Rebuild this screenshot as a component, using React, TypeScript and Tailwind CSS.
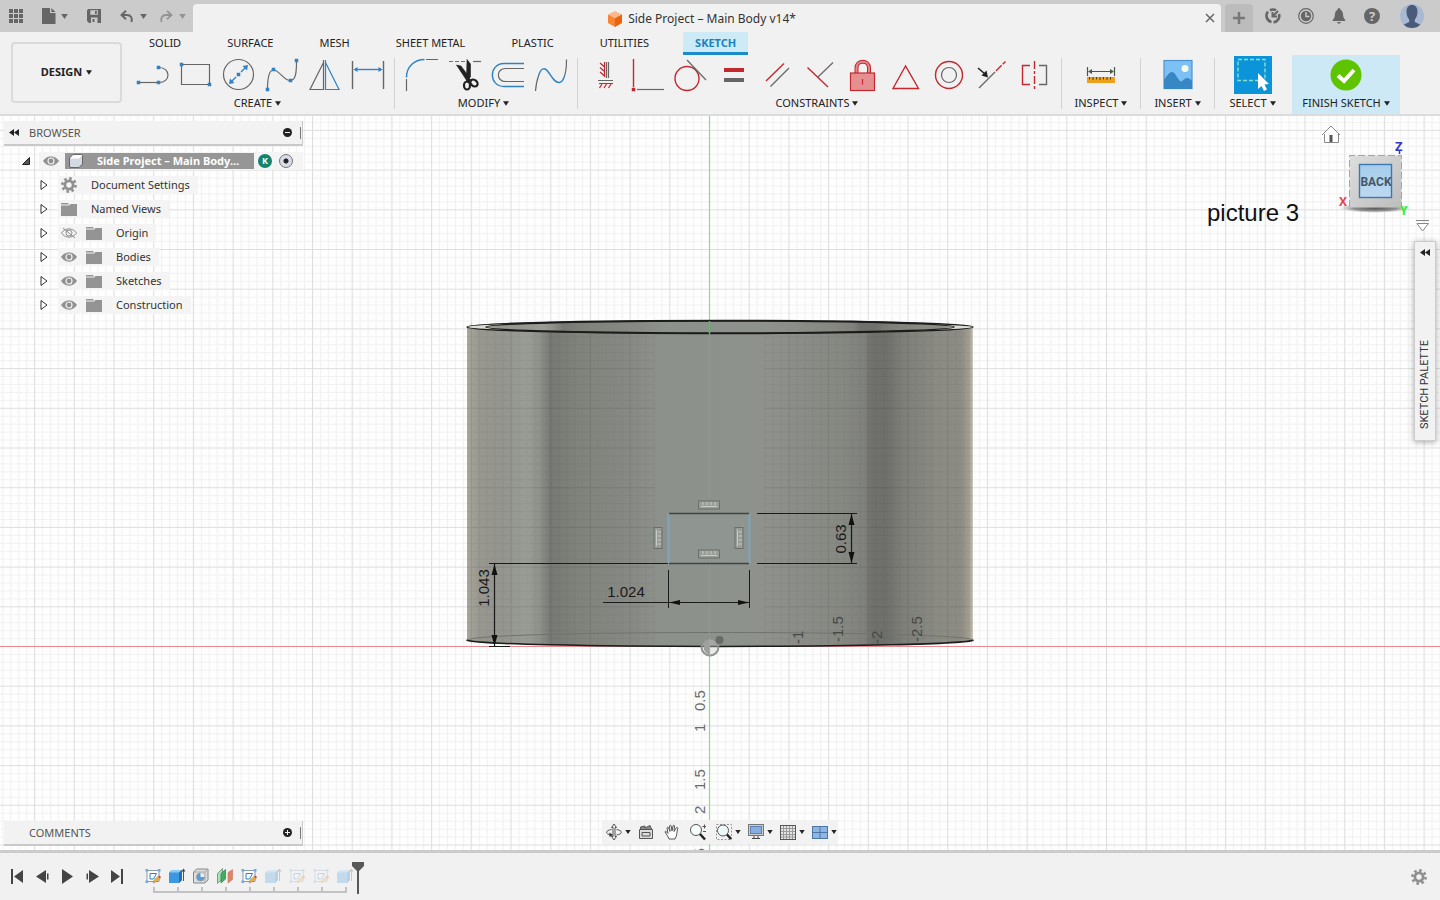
import type { ReactNode } from "react";

const BLUE = "#2f82c4";
const GREY = "#666666";
const RED = "#c4282f";

function Caret({ className = "h-[5px] w-[7px]" }: { className?: string }) {
  return (
    <svg viewBox="0 0 8 6" className={className} fill="currentColor" aria-hidden="true">
      <path d="M0 0H8L4 6Z" />
    </svg>
  );
}

function Tool({ label, children }: { label: string; children: ReactNode }) {
  return (
    <button aria-label={label} className="h-8 w-8 shrink-0">
      <svg viewBox="0 0 32 32" className="h-8 w-8 overflow-visible" fill="none" stroke={GREY} strokeWidth="1.2">
        {children}
      </svg>
    </button>
  );
}

function Dot({ x, y, color = BLUE }: { x: number; y: number; color?: string }) {
  return <rect x={x - 1.75} y={y - 1.75} width="3.5" height="3.5" fill={color} stroke="none" />;
}

const CREATE_TOOLS = [
  {
    label: "Line",
    icon: (
      <>
        <path d="M1.5 23.5H21.5" />
        <path d="M22 8.5C34 8.5 34 23.5 22 23.5" />
        <Dot x={1.5} y={23.5} />
        <Dot x={21.5} y={23.5} />
        <Dot x={21.5} y={8.5} />
      </>
    ),
  },
  {
    label: "Rectangle",
    icon: (
      <>
        <path d="M1.5 5.5H29.5V25.5H1.5Z" />
        <Dot x={1.5} y={5.5} />
        <Dot x={29.5} y={25.5} />
      </>
    ),
  },
  {
    label: "Circle",
    icon: (
      <>
        <circle cx="15.5" cy="15.5" r="15" />
        <path d="M9 22L13 18M18 13L22 9" stroke={BLUE} strokeWidth="1.4" />
        <path d="M6 25L7 19.5L11.5 24ZM25 6L24 11.5L19.5 7Z" fill={BLUE} stroke="none" />
        <Dot x={15.5} y={15.5} />
      </>
    ),
  },
  {
    label: "Spline",
    icon: (
      <>
        <path d="M1.5 30.5C1.5 19 3 11 7.5 11C13 11 18 21.5 24 21.5C30 21.5 30.5 13 30.5 2" />
        <Dot x={1.5} y={30.5} />
        <Dot x={7.5} y={10.5} />
        <Dot x={24.5} y={21.5} />
        <Dot x={30.5} y={1.5} />
      </>
    ),
  },
  {
    label: "Mirror",
    icon: (
      <>
        <path d="M1 30.5H14.5V3.5ZM14.5 1V31" />
        <path d="M30 30.5H16.5V3.5ZM16.5 1V31" stroke={BLUE} />
      </>
    ),
  },
  {
    label: "Sketch Dimension",
    icon: (
      <>
        <path d="M.5 2V30M31.5 2V30" strokeWidth="1.4" />
        <path d="M3 10.5H29" stroke={BLUE} strokeWidth="1.4" />
        <path d="M1.5 10.5L5.5 8V13ZM30.5 10.5L26.5 8V13Z" fill={BLUE} stroke="none" />
      </>
    ),
  },
];

const MODIFY_TOOLS = [
  {
    label: "Fillet",
    icon: (
      <>
        <path d="M.5 20V32M20 .5H32" />
        <path d="M.5 18.5C.5 8 8 .5 18.5 .5" stroke={BLUE} strokeWidth="1.4" />
      </>
    ),
  },
  {
    label: "Trim",
    icon: (
      <>
        <path d="M0 2.5H17" stroke={BLUE} strokeDasharray="4 2" />
        <path d="M24 2.5H32" />
        <path d="M7.5 6L12 7L21 19L18 22ZM18 .5L21.5 5V18L17.5 20Z" fill="#222" stroke="#222" strokeWidth=".6" />
        <ellipse cx="18" cy="26.5" rx="3" ry="4" stroke="#222" strokeWidth="2.2" />
        <ellipse cx="25" cy="24" rx="3" ry="4" stroke="#222" strokeWidth="2.2" transform="rotate(-50 25 24)" />
        <path d="M17 18L23 21L18 24Z" fill="#222" stroke="none" />
      </>
    ),
  },
  {
    label: "Offset",
    icon: (
      <>
        <path d="M32 4.5H12C-3.5 4.5-3.5 27.5 12 27.5H32" stroke={BLUE} strokeWidth="1.4" />
        <path d="M32 9.5H13.5C4 9.5 4 22.5 13.5 22.5H32" />
      </>
    ),
  },
  {
    label: "Curvature",
    icon: (
      <>
        <path d="M.5 32C1 26 2 21 3.5 17M29.5 17C31 13 31.5 7 31.5 .5" />
        <path d="M3.5 17C6 8 10 8 14 14C17 18.5 20 24 24.5 23.5C27 23 28.5 20.5 29.5 17" stroke={BLUE} strokeWidth="1.4" />
      </>
    ),
  },
];

const CONSTRAINT_TOOLS = [
  {
    label: "Horizontal/Vertical",
    icon: (
      <>
        <path d="M17.5 3V19M19.5 3V19M9 21.5H24" />
        <path
          d="M11 4L15.500 8M11 8.5L15.5 12.5M11 13L15.5 17M15.5 3V18M10 24.5H24M13 25L10.5 29M17.5 25L15 29M22 25L19.5 29"
          stroke={RED}
        />
      </>
    ),
  },
  {
    label: "Coincident",
    icon: (
      <>
        <path d="M5 30.5H32" />
        <path d="M1.5 0V28" stroke={RED} strokeWidth="1.4" />
        <Dot x={1.5} y={30.5} color={RED} />
      </>
    ),
  },
  {
    label: "Tangent",
    icon: (
      <>
        <circle cx="12" cy="19.5" r="12" stroke={RED} strokeWidth="1.4" />
        <path d="M12 1L31 21" />
      </>
    ),
  },
  {
    label: "Equal",
    icon: (
      <>
        <path d="M6 11H26" stroke={RED} strokeWidth="4" />
        <path d="M6 21H26" strokeWidth="4" />
      </>
    ),
  },
  {
    label: "Parallel",
    icon: (
      <>
        <path d="M9.5 27.5L28 9" />
        <path d="M5 22L23 4.5" stroke={RED} strokeWidth="1.4" />
      </>
    ),
  },
  {
    label: "Perpendicular",
    icon: (
      <>
        <path d="M14 18L29 3.5" />
        <path d="M3.5 8.5L24 28" stroke={RED} strokeWidth="1.4" />
      </>
    ),
  },
  {
    label: "Fix/Unfix",
    icon: (
      <>
        <path d="M9.5 14V9C9.5 .5 22 .5 22 9V14" stroke={RED} strokeWidth="4" />
        <path d="M9.5 14V9C9.5 .5 22 .5 22 9V14" stroke="#e08a8c" strokeWidth="2" />
        <rect x="3.5" y="14" width="24" height="17.5" fill="#e58f90" stroke={RED} />
        <path d="M15.5 20V25.5" stroke={RED} />
      </>
    ),
  },
  {
    label: "MidPoint",
    icon: <path d="M15.5 7L3 29.5H28.5Z" stroke={RED} strokeWidth="1.4" />,
  },
  {
    label: "Concentric",
    icon: (
      <>
        <circle cx="16" cy="16" r="13.5" stroke={RED} strokeWidth="1.4" />
        <circle cx="16" cy="16" r="7.5" />
      </>
    ),
  },
  {
    label: "Collinear",
    icon: (
      <>
        <path d="M3 29L19 13" />
        <path d="M20 12L29.5 2.5" stroke={RED} strokeWidth="1.4" strokeDasharray="8 1.5" />
        <path d="M2 9L9 15" stroke="#222" strokeWidth="1.6" />
        <path d="M12 18.5L5.5 16.5L10.5 11.5Z" fill="#222" stroke="none" />
      </>
    ),
  },
  {
    label: "Symmetry",
    icon: (
      <>
        <path d="M20 6.5H27.5V25.5H20" strokeWidth="1.4" />
        <path d="M11 6.5H3.5V25.5H11" stroke={RED} strokeWidth="1.4" />
        <path d="M15.5 2V30" stroke={RED} strokeWidth="1.4" strokeDasharray="8 2 3 2" />
      </>
    ),
  },
];

const TOOL_GROUPS = [
  { name: "CREATE", tools: CREATE_TOOLS },
  { name: "MODIFY", tools: MODIFY_TOOLS },
  { name: "CONSTRAINTS", tools: CONSTRAINT_TOOLS },
];

const TABS = ["SOLID", "SURFACE", "MESH", "SHEET METAL", "PLASTIC", "UTILITIES", "SKETCH"];

function GroupLabel({ children }: { children: ReactNode }) {
  return (
    <button className="flex items-center justify-center gap-[3px] text-[11px] leading-4 whitespace-nowrap">
      {children}
      <Caret className="h-[5px] w-[6px]" />
    </button>
  );
}

function Separator() {
  return <div className="mt-[3px] h-[51px] w-px shrink-0 bg-[#d2d2d2]" />;
}

function TitleBar() {
  return (
    <header className="flex h-8 shrink-0 items-end bg-[#cbcbcb] text-[#666]">
      <div className="flex h-8 w-[193px] shrink-0 items-center gap-[19px] pl-[9px]">
        <button aria-label="Data panel">
          <svg viewBox="0 0 14 14" className="size-3.5" fill="currentColor">
            <path d="M0 0h4v4H0zM5 0h4v4H5zM10 0h4v4h-4zM0 5h4v4H0zM5 5h4v4H5zM10 5h4v4h-4zM0 10h4v4H0zM5 10h4v4H5zM10 10h4v4h-4z" />
          </svg>
        </button>
        <button aria-label="File" className="flex items-center gap-[5px]">
          <svg viewBox="0 0 14 16" className="h-4 w-3.5" fill="currentColor">
            <path d="M0 0h8v5h5.5v11H0zM9.3 0L13.5 4H9.3z" />
          </svg>
          <Caret />
        </button>
        <button aria-label="Save">
          <svg viewBox="0 0 14 14" className="size-3.5" fill="currentColor">
            <path fillRule="evenodd" d="M0 1.2L1.2 0H14v14H2L0 12zM3.3 1.2v4.6h7.6V1.2zM4 8.5V14h6.5V8.5z" />
            <path d="M8 2h1.8v3H8zM5.5 10h2v3h-2z" />
          </svg>
        </button>
        <div className="flex items-center gap-3">
          <button aria-label="Undo" className="flex items-center gap-[6px]">
            <svg viewBox="0 0 14 13" className="h-[13px] w-3.5" fill="none" stroke="currentColor" strokeWidth="2">
              <path d="M2 5H7C11 5 12.5 8 11.5 12" />
              <path d="M6 .8L1.5 5L6 9.2" />
            </svg>
            <Caret />
          </button>
          <button aria-label="Redo" className="flex items-center gap-[6px] text-[#939393]">
            <svg viewBox="0 0 14 13" className="h-[13px] w-3.5" fill="none" stroke="currentColor" strokeWidth="1.8">
              <path d="M12 5H7C3 5 1.5 8 2.5 12" />
              <path d="M8 .8L12.5 5L8 9.2" />
            </svg>
            <Caret />
          </button>
        </div>
      </div>
      <div className="flex h-7 flex-1 items-center rounded-t bg-[#f1f1f1] px-1.5 text-[#333]">
        <div className="flex flex-1 items-center justify-center gap-1.5 pt-0.5">
          <svg viewBox="0 0 14 16" className="h-4 w-3.5" aria-hidden="true">
            <path d="M7 0L14 3.5L7 7L0 3.5Z" fill="#fbb98b" />
            <path d="M0 3.5L7 7V16L0 12Z" fill="#fa8434" />
            <path d="M14 3.5L7 7V16L14 12Z" fill="#e8640c" />
          </svg>
          <h1 className="text-[12px] leading-4">Side Project – Main Body v14*</h1>
        </div>
        <button aria-label="Close tab">
          <svg viewBox="0 0 10 10" className="size-2.5" stroke="#666" strokeWidth="1.5">
            <path d="M1 1L9 9M9 1L1 9" />
          </svg>
        </button>
      </div>
      <div className="ml-1 flex h-8 w-[215px] shrink-0 items-center">
        <button aria-label="New tab" className="mt-1 flex h-7 w-7 items-center justify-center rounded-t bg-[#bcbcbc]">
          <svg viewBox="0 0 14 14" className="size-3.5" stroke="#777" strokeWidth="2.5">
            <path d="M7 1V13M1 7H13" />
          </svg>
        </button>
        <div className="ml-3 flex items-center gap-[17px]">
          <button aria-label="Extensions">
            <svg viewBox="0 0 16 16" className="size-4" fill="none" stroke="currentColor" strokeWidth="2.6">
              <path d="M6.5 14A6.500 6.500 0 0 1 3 3.500" />
              <path d="M5 2.300A6.500 6.500 0 0 1 11 2.200" />
              <path d="M14 6A6.500 6.500 0 0 1 8.500 14.300" />
              <path d="M7.500 4V8.500H12M8 8L13 3" strokeWidth="2" />
            </svg>
          </button>
          <button aria-label="Job status">
            <svg viewBox="0 0 16 16" className="size-4" fill="none" stroke="currentColor">
              <circle cx="8" cy="8" r="7.3" strokeWidth="1.2" />
              <circle cx="8" cy="8" r="5.2" fill="currentColor" stroke="none" />
              <path d="M8 4V8.500H11.500" stroke="#cbcbcb" strokeWidth="1.400" />
            </svg>
          </button>
          <button aria-label="Notifications">
            <svg viewBox="0 0 16 16" className="size-4" fill="currentColor">
              <path d="M8 0C9 0 9.400 .8 9.400 1.800C12 3 12 6 12.300 8.500C12.500 10.500 14.500 11.500 14.500 13H1.500C1.500 11.500 3.500 10.500 3.700 8.500C4 6 4 3 6.600 1.800C6.600 .8 7 0 8 0ZM6 14H10C9.500 16.300 6.500 16.300 6 14Z" />
            </svg>
          </button>
          <button aria-label="Help" className="size-4 rounded-full bg-[#666] text-[13px] leading-4 font-bold text-[#cbcbcb]">
            ?
          </button>
        </div>
        <button aria-label="Account" className="ml-5">
          <svg viewBox="0 0 24 24" className="size-6">
            <clipPath id="avatar">
              <circle cx="12" cy="12" r="12" />
            </clipPath>
            <g clipPath="url(#avatar)">
              <rect width="24" height="24" fill="#a9b9d3" />
              <path
                d="M12 1C15.500 1 17.500 3.500 17.500 7.500C17.500 11 16.500 13.500 14.800 15.500V18L21 21V24H3V21L9.200 18V15.500C7.500 13.500 6.500 11 6.500 7.500C6.500 3.500 8.500 1 12 1Z"
                fill="#495b78"
              />
            </g>
          </svg>
        </button>
      </div>
    </header>
  );
}

function Ribbon() {
  return (
    <div className="flex h-[84px] shrink-0 border-b-2 border-[#dcdcdc] bg-[#f1f1f1] text-[#222]">
      <button className="mt-[10px] ml-[11px] flex h-[61px] w-[111px] shrink-0 items-center justify-center gap-1 rounded border-2 border-[#dadada] text-[11px] font-bold">
        DESIGN
        <Caret className="h-[5px] w-[6px]" />
      </button>
      <div className="flex min-w-0 flex-1 flex-col pl-[15px]">
        <nav className="flex h-[23px] gap-[22px]">
          {TABS.map((tab) => (
            <a
              key={tab}
              href="#"
              className={
                tab === "SKETCH"
                  ? "border-b-[3px] border-[#1a8cc9] bg-[#cdeaf7] px-3 pt-[3px] text-[11px] leading-4 font-bold text-[#1a82bd]"
                  : "px-3 pt-[3px] text-[11px] leading-4 text-[#222]"
              }
            >
              {tab}
            </a>
          ))}
        </nav>
        <div className="flex h-[59px]">
          {TOOL_GROUPS.map((group, index) => (
            <div key={group.name} className="flex">
              <div className={index === 0 ? "flex flex-col pr-2.5" : "flex flex-col pr-2.5 pl-[11px]"}>
                <div className="flex h-10 items-center gap-[11px]">
                  {group.tools.map((tool) => (
                    <Tool key={tool.label} label={tool.label}>
                      {tool.icon}
                    </Tool>
                  ))}
                </div>
                <div className="flex justify-center pr-1.5">
                  <GroupLabel>{group.name}</GroupLabel>
                </div>
              </div>
              <Separator />
            </div>
          ))}
          <div className="flex w-[78px] flex-col items-center">
            <div className="flex h-10 items-center">
              <Tool label="Measure">
                <path d="M2.5 8V17M29.5 8V17M5 12.5H27" stroke="#4a5a4a" />
                <path d="M3 12.5L7 10V15ZM29 12.5L25 10V15Z" fill="#4a5a4a" stroke="none" />
                <rect x="2" y="18" width="28" height="6" fill="#f0a11c" stroke="none" />
                <path d="M4.5 18V20.5M8 18V21M11.5 18V20.5M15 18V21M18.5 18V20.5M22 18V21M25.5 18V20.5" stroke="#5a4010" strokeWidth="1" />
              </Tool>
            </div>
            <GroupLabel>INSPECT</GroupLabel>
          </div>
          <Separator />
          <div className="flex w-[73px] flex-col items-center">
            <div className="flex h-10 items-center">
              <Tool label="Insert image">
                <rect x="2" y="1.5" width="28" height="28" fill="#7cc0f5" stroke="#4d94cc" />
                <circle cx="23" cy="9.5" r="3.5" fill="#f4fbe6" stroke="none" />
                <path d="M2 21C5 17 7 13 10 13C13 13 15 19 18 22C20 24 22 19 25 19C27 19 28.5 20 30 22V30H2Z" fill="#3787c4" stroke="none" />
              </Tool>
            </div>
            <GroupLabel>INSERT</GroupLabel>
          </div>
          <Separator />
          <div className="flex w-[75px] flex-col items-center">
            <button aria-label="Window selection" className="my-px size-[38px]">
              <svg viewBox="0 0 38 38" className="size-[38px]">
                <rect width="38" height="38" fill="#0b94da" />
                <path d="M4 3.5H31V24.5H4Z" fill="none" stroke="#8be0c8" strokeWidth="1.4" strokeDasharray="4 2" />
                <path d="M24 17V33L27.5 30L30 35L33 33.5L30.5 28.5L35 28Z" fill="#fff" />
              </svg>
            </button>
            <GroupLabel>SELECT</GroupLabel>
          </div>
          <div className="ml-0.5 flex w-[108px] flex-col items-center bg-[#cde9f5]">
            <button aria-label="Finish sketch" className="flex h-10 items-center">
              <svg viewBox="0 0 32 32" className="size-8">
                <circle cx="16" cy="16" r="15.5" fill="#5fc400" />
                <path d="M8 16.5L14 22L24 11" fill="none" stroke="#fff" strokeWidth="4" />
              </svg>
            </button>
            <GroupLabel>FINISH SKETCH</GroupLabel>
          </div>
        </div>
      </div>
    </div>
  );
}

/* Ruler glyph that marks a horizontal or vertical constraint */
function ConstraintGlyph({ x, y, vertical = false }: { x: number; y: number; vertical?: boolean }) {
  return (
    <g transform={vertical ? `translate(${x} ${y}) rotate(90)` : `translate(${x} ${y})`} fill="none">
      <rect x="-10.5" y="-4" width="21" height="8" fill="#9a9e98" stroke="#6b6e69" />
      <path d="M-8 1.5H8M-6 -3V0M-2 -3V0M2 -3V0M6 -3V0" stroke="#c9cbc6" />
    </g>
  );
}

const AXIS_LABELS = [
  { text: "-1", x: 803, y: 644 },
  { text: "-1.5", x: 843, y: 642 },
  { text: "-2", x: 882, y: 644 },
  { text: "-2.5", x: 922, y: 642 },
  { text: "0.5", x: 705, y: 711 },
  { text: "1", x: 705, y: 732 },
  { text: "1.5", x: 705, y: 790 },
  { text: "2", x: 705, y: 814 },
  { text: "2.5", x: 705, y: 869 },
];

const DIMENSIONS = [
  { text: "1.043", x: 489, y: 588, rotate: true },
  { text: "0.63", x: 846, y: 539, rotate: true },
  { text: "1.024", x: 626, y: 597, rotate: false },
];

function Viewport() {
  return (
    <svg
      viewBox="0 116 1440 734"
      preserveAspectRatio="xMidYMid slice"
      className="absolute inset-0 h-full w-full"
      role="img"
      aria-label="Sketch canvas"
    >
      <defs>
        <pattern id="minor" x="709" y="646" width="7.94" height="7.94" patternUnits="userSpaceOnUse">
          <path d="M0 .5H7.94M.5 0V7.94" stroke="#000" strokeOpacity=".05" />
        </pattern>
        <pattern id="major" x="709" y="646" width="39.7" height="39.7" patternUnits="userSpaceOnUse">
          <path d="M0 .5H39.7M.5 0V39.7" stroke="#000" strokeOpacity=".08" />
        </pattern>
        <linearGradient id="shell">
          <stop offset="0" stopColor="#a9a69b" />
          <stop offset=".025" stopColor="#98978f" />
          <stop offset=".07" stopColor="#94958f" />
          <stop offset=".12" stopColor="#9a9c96" />
          <stop offset=".145" stopColor="#8d8f89" />
          <stop offset=".165" stopColor="#777974" />
          <stop offset=".22" stopColor="#80827c" />
          <stop offset=".33" stopColor="#888b85" />
          <stop offset=".38" stopColor="#8d918b" />
          <stop offset=".6" stopColor="#8e918c" />
          <stop offset=".74" stopColor="#868882" />
          <stop offset=".785" stopColor="#80817c" />
          <stop offset=".8" stopColor="#70716c" />
          <stop offset=".83" stopColor="#6f706b" />
          <stop offset=".86" stopColor="#7d7e78" />
          <stop offset=".93" stopColor="#8b8b84" />
          <stop offset=".975" stopColor="#8d8b83" />
          <stop offset=".993" stopColor="#a29e92" />
          <stop offset="1" stopColor="#cfcabb" />
        </linearGradient>
      </defs>
      <rect x="-600" y="-300" width="2640" height="1600" fill="#fefefe" />
      <rect x="-600" y="-300" width="2640" height="1600" fill="url(#minor)" />
      <rect x="-600" y="-300" width="2640" height="1600" fill="url(#major)" />
      <path d="M-600 646.500H2040" stroke="#e8898f" strokeWidth="1.2" />
      <path d="M709.500 -300V1300" stroke="#7de87d" strokeWidth="1.2" />

      <path d="M467 327C467 318 973 318 973 327V640C973 649 467 649 467 640Z" fill="url(#shell)" />
      <g opacity=".7">
        <rect x="467" y="322" width="188" height="322" fill="url(#minor)" />
        <rect x="764" y="322" width="209" height="322" fill="url(#minor)" />
        <rect x="467" y="322" width="188" height="322" fill="url(#major)" />
        <rect x="764" y="322" width="209" height="322" fill="url(#major)" />
      </g>
      <ellipse cx="720" cy="327" rx="253" ry="6.5" fill="#ddddd6" />
      <ellipse cx="720" cy="327" rx="234" ry="6.5" fill="url(#shell)" />
      <g fill="none" stroke="#1c1c1c" strokeWidth="1.5">
        <ellipse cx="720" cy="327" rx="253" ry="6.5" />
        <ellipse cx="720" cy="327" rx="234" ry="6" />
        <path d="M466.5 640C480 648.5 960 648.5 973.5 640" />
      </g>
      <path d="M467 640C480 630 960 630 973 640" fill="none" stroke="#70736e" />
      <path d="M709.5 321V334" stroke="#3fcf4a" strokeWidth="1.5" />
      <path d="M709.5 334V640" stroke="#85a485" strokeOpacity=".7" />

      <rect x="668.5" y="513.5" width="81" height="50" fill="#8f9692" />
      <path d="M668.5 513V564M749.5 513V564" stroke="#7fa6b8" strokeWidth="2" />
      <path d="M669 513.5H749M669 563.5H749" stroke="#3f4543" strokeWidth="1.5" />
      <ConstraintGlyph x={709} y={505} />
      <ConstraintGlyph x={709} y={554} />
      <ConstraintGlyph x={658} y={538} vertical />
      <ConstraintGlyph x={739} y={538} vertical />

      <g stroke="#1a1a1a" strokeWidth="1.2">
        <path d="M757 513.5H857M757 563.5H857M851.5 514V563" />
        <path d="M489 563.5H668M494.5 564V646M489 646.5H510" />
        <path d="M603 602.5H749M668.5 570V608M749.5 570V608" strokeWidth="1" />
      </g>
      <path
        d="M851.5 514L854.5 525H848.5ZM851.5 563L854.5 552H848.5ZM494.5 564L497.5 575H491.5ZM494.5 646L497.5 635H491.5ZM669 602.5L680 600V605ZM749 602.5L738 600V605Z"
        fill="#111"
      />

      <g className="font-['Liberation_Sans',sans-serif] text-[15px]">
        {DIMENSIONS.map((dim) => (
          <text
            key={dim.text}
            textAnchor="middle"
            fill="#1a1a1a"
            transform={dim.rotate ? `translate(${dim.x} ${dim.y}) rotate(-90)` : `translate(${dim.x} ${dim.y})`}
          >
            {dim.text}
          </text>
        ))}
        {AXIS_LABELS.map((label) => (
          <text
            key={label.text}
            fill={label.y > 650 ? "#6a6a6a" : "#474845"}
            transform={`translate(${label.x} ${label.y}) rotate(-90)`}
          >
            {label.text}
          </text>
        ))}
      </g>

      <circle cx="710" cy="647" r="8.5" fill="#c9cbc8" fillOpacity=".4" stroke="#909290" strokeWidth="2" />
      <path d="M709 639.5A8 8 0 0 0 709 654.5Z" fill="#9c9f9b" />
      <path d="M709.5 639V656" stroke="#5fd868" />
      <circle cx="719.5" cy="640" r="4" fill="#686a67" />

      <text x="1207" y="221" fill="#111" className="font-['Liberation_Sans',sans-serif] text-[24px]">
        picture 3
      </text>
    </svg>
  );
}

function Eye({ hidden = false }: { hidden?: boolean }) {
  return (
    <svg viewBox="0 0 16 12" className="h-3 w-4 shrink-0" fill="none" stroke="#8f8f8f" aria-hidden="true">
      {hidden ? (
        <>
          <path d="M.5 6C4 .5 12 .5 15.5 6C12 11.5 4 11.5 .5 6ZM2 1L14 11" />
          <circle cx="8" cy="6" r="3" />
        </>
      ) : (
        <>
          <path d="M.5 6C4 .5 12 .5 15.5 6C12 11.5 4 11.5 .5 6Z" fill="#8f8f8f" />
          <circle cx="8" cy="6" r="3" stroke="#f4f4f4" strokeWidth="1.2" />
        </>
      )}
    </svg>
  );
}

function Folder() {
  return (
    <svg viewBox="0 0 16 13" className="h-[13px] w-4 shrink-0" fill="#949494" aria-hidden="true">
      <path d="M0 0H7L8 1.5H0ZM0 2.5H8L9.5 1H16V13H0Z" />
    </svg>
  );
}

function Gear({ className, hole = "#f4f4f4" }: { className: string; hole?: string }) {
  return (
    <svg viewBox="0 0 16 16" className={className} aria-hidden="true">
      <circle cx="8" cy="8" r="6.6" fill="none" stroke="#8f8f8f" strokeWidth="2.6" strokeDasharray="2.59 2.59" />
      <circle cx="8" cy="8" r="5.5" fill="#8f8f8f" />
      <circle cx="8" cy="8" r="2.7" fill={hole} />
    </svg>
  );
}

function Rewind() {
  return (
    <svg viewBox="0 0 10 7" className="h-[7px] w-2.5" fill="#222" aria-hidden="true">
      <path d="M5 0V7L0 3.5ZM10 0V7L5 3.5Z" />
    </svg>
  );
}

const TREE = [
  { name: "Document Settings", kind: "settings" },
  { name: "Named Views", kind: "views" },
  { name: "Origin", kind: "hidden" },
  { name: "Bodies", kind: "visible" },
  { name: "Sketches", kind: "visible" },
  { name: "Construction", kind: "visible" },
];

function PanelHeader({ title, collapsed = false }: { title: string; collapsed?: boolean }) {
  return (
    <div className="flex h-[25px] items-center border-r border-b-2 border-[#c9c9c9] bg-[#f2f2f2] text-[#555]">
      <div className="w-[25px] pl-[5px]">{!collapsed && <Rewind />}</div>
      <h2 className="flex-1 text-[11px] leading-4">{title}</h2>
      <button aria-label={collapsed ? `Expand ${title}` : `Collapse ${title}`} className="mr-2">
        <svg viewBox="0 0 9 9" className="size-[9px]">
          <circle cx="4.5" cy="4.5" r="4.5" fill="#222" />
          <path d={collapsed ? "M2 4.5H7M4.5 2V7" : "M2 4.5H7"} stroke="#f2f2f2" />
        </svg>
      </button>
      <div className="mr-px h-3 w-px bg-[#777]" />
    </div>
  );
}

function Browser() {
  return (
    <aside className="absolute top-[5px] left-1 w-[299px] text-[11px] leading-[18px] text-[#333]">
      <PanelHeader title="BROWSER" />
      <div className="mt-[3px] flex h-6 items-center">
        <button aria-label="Collapse Side Project" className="ml-[18px] w-[17px]">
          <svg viewBox="0 0 8 8" className="size-2">
            <path d="M7.5 .5V7.5H.5Z" fill="#555" stroke="#222" />
          </svg>
        </button>
        <div className="flex h-[18px] flex-1 items-center bg-[#f4f4f4] pl-1">
          <Eye />
          <div className="ml-1.5 flex h-4 w-[189px] items-center bg-[#969696] font-bold text-white">
            <svg viewBox="0 0 14 14" className="ml-1 size-3.5" aria-hidden="true">
              <path d="M.5 4L4 .5H12.5Q13.5 .5 13.5 1.5V10L10 13.5H2Q.5 13.5 .5 12Z" fill="#d4dae2" stroke="#666" />
              <path d="M1 4.5L4.5 1H13L10 4.5Z" fill="#fff" />
            </svg>
            <span className="ml-3.5">Side Project – Main Body...</span>
          </div>
          <span className="ml-1 size-3.5 rounded-full bg-[#16836c] text-center text-[9px] leading-[14px] font-bold text-white">K</span>
          <input
            type="radio"
            name="active-component"
            defaultChecked
            aria-label="Activate component"
            className="ml-[7px] size-3.5 appearance-none rounded-full border border-[#777] bg-[#d9dce8] bg-[radial-gradient(circle,#222_0_2px,transparent_3px)]"
          />
        </div>
      </div>
      <ul>
        {TREE.map((node) => (
          <li key={node.name} className="flex h-6 items-center">
            <button aria-label={`Expand ${node.name}`} className="ml-9 w-[18px]">
              <svg viewBox="0 0 8 10" className="h-2.5 w-2">
                <path d="M1 .5L7 5L1 9.5Z" fill="#fff" stroke="#333" />
              </svg>
            </button>
            <div className="flex h-[18px] items-center gap-[9px] bg-[#f4f4f4] pr-2 pl-[3px]">
              {node.kind === "settings" && <Gear className="size-4" />}
              {(node.kind === "visible" || node.kind === "hidden") && <Eye hidden={node.kind === "hidden"} />}
              {node.kind !== "settings" && <Folder />}
              <span className="pl-[5px]">{node.name}</span>
            </div>
          </li>
        ))}
      </ul>
    </aside>
  );
}

function ViewCube() {
  return (
    <svg
      viewBox="1316 120 124 116"
      className="absolute top-1 right-0 h-[116px] w-[124px] font-['Open_Sans',sans-serif]"
      role="img"
      aria-label="View cube"
    >
      <defs>
        <linearGradient id="cube" x1="0" y1="0" x2="1" y2="1">
          <stop offset="0" stopColor="#dedede" />
          <stop offset="1" stopColor="#bdbdbd" />
        </linearGradient>
        <linearGradient id="face" x1="0" y1="0" x2="0" y2="1">
          <stop offset="0" stopColor="#a5cdec" />
          <stop offset="1" stopColor="#bdd9f0" />
        </linearGradient>
        <radialGradient id="shade">
          <stop offset="0" stopColor="#555" />
          <stop offset=".6" stopColor="#777" stopOpacity=".8" />
          <stop offset="1" stopColor="#bbb" stopOpacity="0" />
        </radialGradient>
      </defs>
      <path d="M1322 135L1331 126L1340 135M1324.5 134V142.5H1338.5V134" fill="#fff" stroke="#888" />
      <path d="M1331 135V142" stroke="#555" strokeWidth="3" />
      <ellipse cx="1375" cy="208" rx="37" ry="5" fill="url(#shade)" />
      <rect x="1349.5" y="155.5" width="52" height="52" fill="url(#cube)" />
      <path d="M1349.5 207V155.5H1401.5V207" fill="none" stroke="#a5a5a5" strokeDasharray="7 3" />
      <rect x="1359.5" y="164.5" width="32" height="33" fill="url(#face)" stroke="#3f78b0" strokeWidth="1.4" />
      <text
        x="1376"
        y="186"
        textAnchor="middle"
        fill="#45566a"
        className="font-['Roboto',sans-serif] text-[12px] font-bold"
      >
        BACK
      </text>
      <text x="1395" y="151" fill="#3535cf" className="text-[13px] font-bold">Z</text>
      <path d="M1399.5 151V154" stroke="#3535cf" strokeWidth="1.5" />
      <text x="1339" y="206" fill="#ee3b46" className="text-[12px] font-bold">X</text>
      <text x="1400" y="215" fill="#2cf02c" className="text-[12px] font-bold">Y</text>
      <path d="M1416 220.5H1429M1417 223.5H1428.5L1422.5 231Z" fill="#fff" stroke="#888" />
    </svg>
  );
}

function SketchPalette() {
  return (
    <button className="absolute top-[125px] right-1 flex h-[200px] w-[22px] flex-col items-center justify-between border border-[#ccc] bg-[#f2f2f2] pt-[7px] pb-[11px] text-[11px] text-[#333] shadow-[0_1px_6px_rgba(0,0,0,0.35)]">
      <Rewind />
      <span className="rotate-180 font-['Roboto',sans-serif] leading-4 [writing-mode:vertical-rl]">SKETCH PALETTE</span>
    </button>
  );
}

function NavTool({ label, caret = false, children }: { label: string; caret?: boolean; children: ReactNode }) {
  return (
    <button aria-label={label} className="flex items-center gap-[3px] text-[#222]">
      <svg viewBox="0 0 16 16" className="size-4 overflow-visible" fill="none" stroke="#555">
        {children}
      </svg>
      {caret && <Caret className="h-1 w-1.5" />}
    </button>
  );
}

function NavigationBar() {
  return (
    <div className="absolute bottom-[6px] left-1/2 flex h-6 w-[236px] -translate-x-1/2 items-center gap-[7px] bg-[#f2f2f2] pl-1">
      <NavTool label="Orbit" caret>
        <path d="M8 0L10.5 3.5H9V12.5H10.5L8 16L5.5 12.5H7V3.5H5.5Z" fill="#eee" />
        <path d="M5.5 5.5C-1 6.5-1 10 5 11M10.5 11C17 10 17 6.5 10.5 5.5" />
        <path d="M3.5 8.5L7 11L3.5 13Z" fill="#333" stroke="none" />
      </NavTool>
      <div className="flex items-center gap-2.5">
        <NavTool label="Look at">
          <path d="M1.5 5.5H14.5V14.5H1.5ZM4 8.5H12V12H4Z" fill="#ddd" />
          <path d="M2.5 5V3L7 2V4L12 1.5L13.5 5" fill="#888" />
        </NavTool>
        <NavTool label="Pan">
          <path
            d="M5 15C4 12 2 10 1 8C1 7 2 7 4 9.5L3 4C3 3 4.500 3 4.700 4L6 7.500L5.500 2C5.500 1 7 1 7.200 2L8 7L9 2C9 1 10.500 1 10.500 2L10 7.500L12.500 3.500C13 3 14 3.500 13.800 4.500C12.500 8 13.500 11 11 15Z"
            fill="#fff"
          />
        </NavTool>
        <NavTool label="Zoom">
          <circle cx="6" cy="6" r="5.5" fill="#f6fbfb" />
          <path d="M10 10L15 15.5" stroke="#222" strokeWidth="2.5" />
          <path d="M12.5 2.5H16M14.5 .5V4.5M13 7.5H16" />
        </NavTool>
        <NavTool label="Zoom window" caret>
          <path d="M.5 .5H15.5V15.5H.5Z" stroke="#999" strokeDasharray="2 1.5" />
          <circle cx="7" cy="6.5" r="5.5" fill="#eefafa" />
          <path d="M11 10.5L15 15" stroke="#222" strokeWidth="2.5" />
        </NavTool>
      </div>
      <NavTool label="Display settings" caret>
        <rect x=".5" y=".5" width="15" height="11" fill="#ccc" stroke="#777" />
        <rect x="2.5" y="2.5" width="11" height="7" fill="#86aee0" stroke="#5f83b5" />
        <path d="M6 12V14M10 12V14M4 14.5H12" stroke="#444" />
      </NavTool>
      <NavTool label="Grid and snaps" caret>
        <rect x=".5" y="1.5" width="15" height="14" fill="#e6e6e6" />
        <path d="M3.5 2V15M6.5 2V15M9.5 2V15M12.5 2V15M1 4.5H15M1 7.5H15M1 10.5H15M1 13H15" stroke="#9a9a9a" />
      </NavTool>
      <NavTool label="Viewports" caret>
        <rect x=".5" y="2.5" width="15" height="12" fill="#8fb6e3" stroke="#4c76a8" />
        <path d="M8 3V14M1 8.5H15" stroke="#4c76a8" />
      </NavTool>
    </div>
  );
}

const PLAYBACK = [
  { label: "Go to start", path: "M0 0H2V15H0ZM12 1V14L3 7.5Z" },
  { label: "Step back", path: "M10 1V14L0 7.5ZM11 4.5H12.5V10.5H11Z" },
  { label: "Play", path: "M1 0L12 7.5L1 15Z" },
  { label: "Step forward", path: "M3 1V14L13 7.5ZM.5 4.5H2V10.5H.5Z" },
  { label: "Go to end", path: "M10 0H12V15H10ZM0 1V14L9 7.5Z" },
];

function FeatureIcon({ kind }: { kind: string }) {
  return (
    <svg viewBox="0 0 16 16" className="size-4 overflow-visible" fill="none" aria-hidden="true">
      {kind === "sketch" && (
        <>
          <path d="M2 2.5H14V13.5H2Z" fill="#fafcff" stroke="#6f8296" strokeWidth=".8" />
          <path d="M5 5.5H11.5L8.5 11H5Z" stroke={BLUE} />
          <path d="M.5 1H3V3.5H.5ZM13 1H15.5V3.5H13ZM.5 12.5H3V15H.5Z" fill="#6cabe0" />
          <path d="M8 15L9 12L13 8.5L15 10.5L11 14Z" fill="#f2ae3a" stroke="#8b6a3a" strokeWidth=".4" />
          <path d="M13 8.5L14.5 7.5L16 9L15 10.5Z" fill="#d8493c" />
        </>
      )}
      {kind === "extrude" && (
        <>
          <path d="M0 4.5L3 2H13V12L10 15H0Z" fill="#3d98e2" />
          <path d="M0 4.5L3 2H13L10 4.5Z" fill="#8ec8f5" />
          <path d="M10 4.5L13 2V12L10 15Z" fill="#1f70b6" />
          <path d="M14.5 13V2" stroke="#555" />
          <path d="M12.5 3.5L14.5 .5L16.5 3.5Z" fill="#444" />
        </>
      )}
      {kind === "hole" && (
        <>
          <path d="M.5 4L3.500 1H15V12L12 15H.5Z" fill="#ddd" stroke="#888" />
          <path d="M12 4V15M1 4H12L15 1" stroke="#aaa" />
          <circle cx="7.500" cy="9" r="4" fill="#5c9cd0" stroke="#999" strokeWidth=".8" />
          <path d="M7.500 9V5A4 4 0 0 1 11.500 9Z" fill="#e8f1f8" />
        </>
      )}
      {kind === "plane" && (
        <>
          <path d="M.5 5.500L5.500 .5V10.500L.5 15.500Z" fill="#a9dfb8" stroke="#5f8f6e" strokeWidth=".8" />
          <path d="M4 5.500L8.500 1.500V11L4 15Z" fill="#3fae62" stroke="#46805a" strokeWidth=".8" />
          <path d="M11 4.500L15.500 1.500V11.500L11 15Z" fill="#e08468" stroke="#b86a50" strokeWidth=".5" />
        </>
      )}
    </svg>
  );
}

const FEATURES = [
  { kind: "sketch", suppressed: false },
  { kind: "extrude", suppressed: false },
  { kind: "hole", suppressed: false },
  { kind: "plane", suppressed: false },
  { kind: "sketch", suppressed: false },
  { kind: "extrude", suppressed: true },
  { kind: "sketch", suppressed: true },
  { kind: "sketch", suppressed: true },
  { kind: "extrude", suppressed: true },
];

function Timeline() {
  return (
    <footer className="flex h-[50px] shrink-0 items-start border-t-[3px] border-[#cbcbcb] bg-[#f1f1f1] pl-[11px]">
      <div className="flex gap-3 pt-4">
        {PLAYBACK.map((control) => (
          <button key={control.label} aria-label={control.label}>
            <svg viewBox="0 0 13 15" className="h-[15px] w-[13px]" fill="#444">
              <path d={control.path} />
            </svg>
          </button>
        ))}
      </div>
      <div className="ml-[21px] flex pt-[15px]">
        {FEATURES.map((feature, index) => (
          <button key={index} aria-label={`${feature.kind} ${index + 1}`} className="flex w-6 flex-col items-start gap-[3px]">
            <span className={feature.suppressed ? "h-4 opacity-25" : "h-4"}>
              <FeatureIcon kind={feature.kind} />
            </span>
            <span
              className={
                index === FEATURES.length - 1
                  ? "ml-2 h-[6px] w-0.5 bg-[#c2c2c2]"
                  : "ml-2 h-[6px] w-6 border-b-2 border-l-2 border-[#c2c2c2]"
              }
            />
          </button>
        ))}
      </div>
      <svg viewBox="0 0 12 32" className="-ml-[9px] mt-[9px] h-8 w-3" fill="#585858" role="img" aria-label="Timeline marker">
        <path d="M0 0H12V4L7 9V32H5V9L0 4Z" />
      </svg>
      <button aria-label="Timeline settings" className="mt-4 mr-[13px] ml-auto">
        <Gear className="size-4" hole="#f1f1f1" />
      </button>
    </footer>
  );
}

export default function App() {
  return (
    <div className="flex h-screen flex-col overflow-hidden bg-[#f1f1f1] font-['Noto_Sans',sans-serif]">
      <TitleBar />
      <Ribbon />
      <main className="relative min-h-0 flex-1 overflow-hidden">
        <Viewport />
        <Browser />
        <ViewCube />
        <SketchPalette />
        <section className="absolute bottom-1 left-1 w-[299px]">
          <PanelHeader title="COMMENTS" collapsed />
        </section>
        <NavigationBar />
      </main>
      <Timeline />
    </div>
  );
}
